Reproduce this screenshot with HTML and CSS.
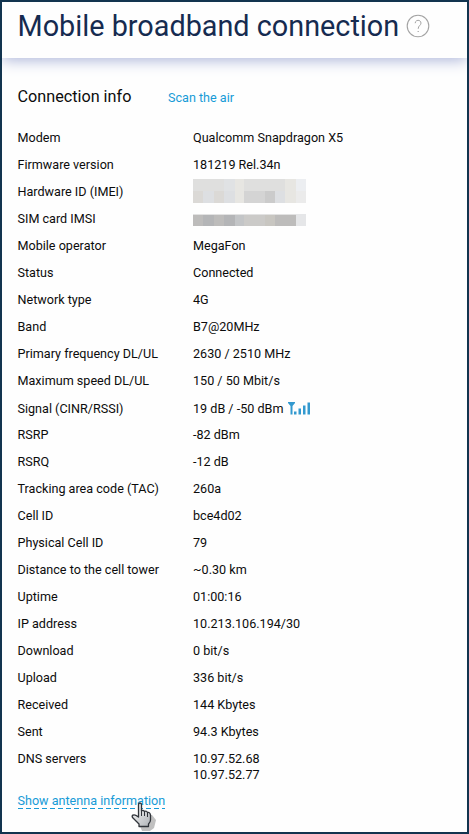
FILE: index.html
```html
<!DOCTYPE html>
<html lang="en">
<head>
<meta charset="utf-8">
<title>Mobile broadband connection</title>
<link rel="stylesheet" href="styles.css">
</head>
<body>
<div class="frame">
  <header class="header">
    <h1 class="title">Mobile broadband connection</h1>
    <svg class="help" viewBox="0 0 24 24" width="24" height="24" fill="none" stroke="#a3a3a3">
      <circle cx="12" cy="12" r="10.8" stroke-width="1.1"/>
      <path d="M9.2 9.2C9.2 5.4 15 5.4 15 9.1C15 11.4 12.2 11.6 12.2 14.8" stroke-width="1"/>
      <path d="M12.2 16.9V18.1" stroke-width="1.2"/>
    </svg>
  </header>
  <main class="content">
    <div class="section-head">
      <h2 class="section-title">Connection info</h2>
      <a class="link">Scan the air</a>
    </div>
    <dl class="info">
      <dt>Modem</dt><dd>Qualcomm Snapdragon X5</dd>
      <dt>Firmware version</dt><dd>181219 Rel.34n</dd>
      <dt>Hardware ID (IMEI)</dt>
      <dd><svg class="mask mask-imei" width="113" height="24" viewBox="0 0 113 24" shape-rendering="crispEdges">
        <path fill="#dfdfde" d="M0 0h113v24H0z"/>
        <path fill="#e0e2e4" d="M31 0h11v12H31z"/>
        <path fill="#e7e6e2" d="M42 0h9v24h-9zM92 0h11v24H92z"/>
        <path fill="#dddfe2" d="M10 12h11v12H10zM31 12h11v12H31zM82 12h10v12H82z"/>
        <path fill="#dbd9d6" d="M0 12h10v12H0zM21 12h10v12H21z"/>
        <path fill="#d4d4d4" d="M51 12h21v12H51z"/>
        <path fill="#cbcbcb" d="M72 12h10v12H72z"/>
        <path fill="#eceef1" d="M103 0h10v12h-10z"/>
        <path fill="#ebebeb" d="M103 12h10v12h-10z"/>
      </svg></dd>
      <dt>SIM card IMSI</dt>
      <dd><svg class="mask mask-imsi" width="113" height="12" viewBox="0 0 113 12" shape-rendering="crispEdges">
        <path fill="#bdbcbb" d="M0 0h113v12H0z"/>
        <path fill="#e2e2e2" d="M0 0h113v1H0z"/>
        <path fill="#b4b5b7" d="M10 1h11v11H10zM31 1h11v11H31z"/>
        <path fill="#c3c5c7" d="M42 1h9v11h-9z"/>
        <path fill="#cbcac8" d="M51 1h21v11H51z"/>
        <path fill="#c8c6c1" d="M72 1h10v11H72z"/>
        <path fill="#e5e6e8" d="M103 0h10v12h-10z"/>
      </svg></dd>
      <dt>Mobile operator</dt><dd>MegaFon</dd>
      <dt>Status</dt><dd>Connected</dd>
      <dt>Network type</dt><dd>4G</dd>
      <dt>Band</dt><dd>B7@20MHz</dd>
      <dt>Primary frequency DL/UL</dt><dd>2630 / 2510 MHz</dd>
      <dt>Maximum speed DL/UL</dt><dd>150 / 50 Mbit/s</dd>
      <dt class="signal-cell">Signal (CINR/RSSI)</dt>
      <dd class="signal-cell">19 dB / -50 dBm<svg class="signal" width="23" height="13" viewBox="0 0 23 13" fill="#3399cf">
        <path d="M0 0H7V1L4.5 4V12.5H2.5V4L0 1zM6 9.5H8.5V12.5H6zM10.5 6.5H13V12.5H10.5zM15 3.5H17.5V12.5H15zM19.5 .5H22V12.5H19.5z"/>
      </svg></dd>
      <dt>RSRP</dt><dd>-82 dBm</dd>
      <dt>RSRQ</dt><dd>-12 dB</dd>
      <dt>Tracking area code (TAC)</dt><dd>260a</dd>
      <dt>Cell ID</dt><dd>bce4d02</dd>
      <dt>Physical Cell ID</dt><dd>79</dd>
      <dt>Distance to the cell tower</dt><dd>~0.30 km</dd>
      <dt>Uptime</dt><dd>01:00:16</dd>
      <dt>IP address</dt><dd>10.213.106.194/30</dd>
      <dt>Download</dt><dd>0 bit/s</dd>
      <dt>Upload</dt><dd>336 bit/s</dd>
      <dt>Received</dt><dd>144 Kbytes</dd>
      <dt>Sent</dt><dd>94.3 Kbytes</dd>
      <dt>DNS servers</dt><dd>10.97.52.68<br>10.97.52.77</dd>
    </dl>
    <a class="link more">Show antenna information</a>
  </main>
  <svg class="cursor" width="28" height="32" viewBox="0 0 28 32">
    <defs><linearGradient id="hand" x1="0" y1="0" x2="1" y2="1"><stop offset="0" stop-color="#fff"/><stop offset="1" stop-color="#aeb2b6"/></linearGradient></defs>
    <path fill="#8c8c8c" opacity=".55" d="M13 13L21 14L25 19L23 27L19 30H11L9 25z"/>
    <path fill="url(#hand)" stroke="#30343a" stroke-width="1.3" stroke-linejoin="round" d="M7.500 16V4Q7.500 2 9 2T10.500 4V10Q12 8.500 13.500 10.500Q15.500 9.500 16.500 11.500Q19 11 19.500 14V19Q19.500 21 17.500 23V25.500H8V23L2 17Q0 14.500 2.500 14Q4 13.500 7.500 16z"/>
    <path fill="none" stroke="#30343a" d="M10.500 10V15M13.500 11V15M16.500 12V16"/>
  </svg>
</div>
</body>
</html>
```

FILE: styles.css
```css
* {
  box-sizing: border-box;
}

body {
  margin: 0;
  background: #fefefe;
  color: #0c0c0c;
  font: 12.6px/16px Roboto, "Liberation Sans", sans-serif;
}

.frame {
  position: relative;
  height: 834px;
  border: 2px solid #12344f;
  overflow: hidden;
}

.header {
  display: flex;
  height: 56px;
  padding-left: 15.5px;
  background: #fefefe;
  box-shadow: 0 2px 14px #a9b2d8;
}

.title {
  margin: 4px 0 0;
  color: #162b50;
  font-size: 28.8px;
  line-height: 40px;
  font-weight: 400;
  white-space: nowrap;
}

.help {
  flex: none;
  margin: 12px 0 0 7px;
}

.content {
  padding: 28px 15.5px 0;
}

.section-head {
  display: flex;
  align-items: baseline;
  height: 22px;
}

.section-title {
  width: 150.5px;
  margin: 0;
  font-size: 16.2px;
  line-height: 22px;
  font-weight: 400;
}

.link {
  color: #179bd7;
}

.info {
  display: grid;
  grid-template-columns: 175.5px 1fr;
  grid-auto-rows: minmax(16px, auto);
  row-gap: 11px;
  margin: 22px 0 0;
}

.info dt {
  white-space: nowrap;
}

.info dd {
  margin: 0;
}

.mask {
  display: block;
}

.mask-imei {
  margin-top: -5px;
  margin-bottom: -3px;
}

.mask-imsi {
  margin-top: 3px;
}

.info .signal-cell {
  height: 16px;
  padding-top: 1px;
}

.signal {
  margin-left: 5px;
  vertical-align: -2px;
}

.more {
  display: inline-block;
  margin-top: 10px;
  background: repeating-linear-gradient(to right, #179bd7 0 5px, transparent 5px 8px) 0 100% / 100% 1px no-repeat;
}

.cursor {
  position: absolute;
  left: 129px;
  top: 799px;
}
```
